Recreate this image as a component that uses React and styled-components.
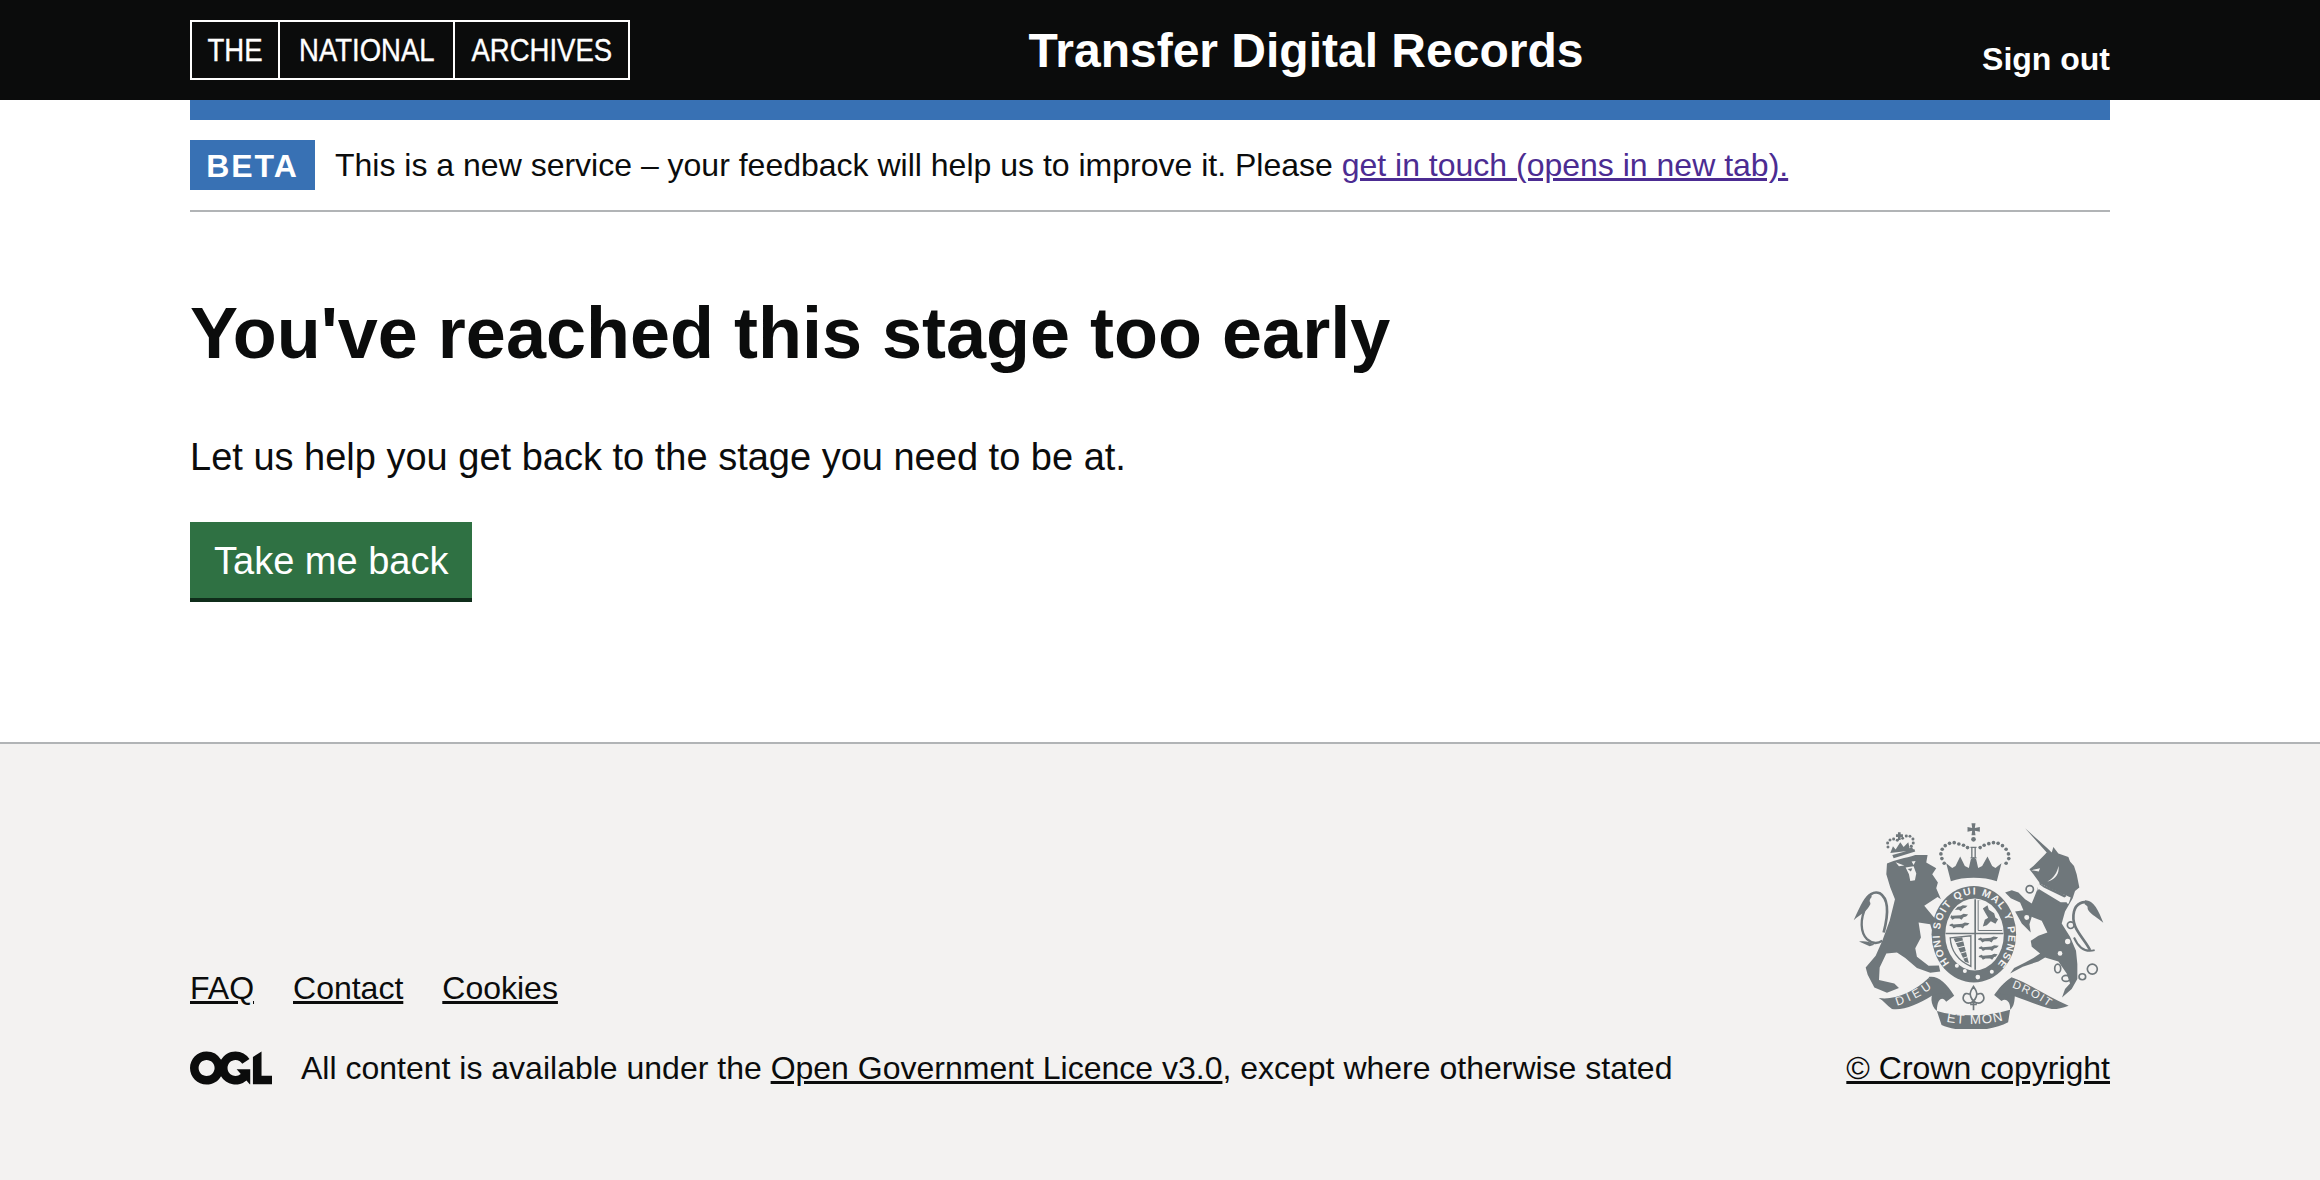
import React from 'react';
import styled, { createGlobalStyle } from 'styled-components';

const GlobalStyle = createGlobalStyle`
  html, body { margin: 0; padding: 0; }
  body {
    font-family: "Liberation Sans", Arial, sans-serif;
    color: #0b0c0c;
    background: #fff;
  }
`;

const Page = styled.div`
  min-height: 100vh;
  display: flex;
  flex-direction: column;
`;

const Width = styled.div`
  width: 1920px;
  margin-left: 190px;
`;

const Header = styled.header`
  background: #0b0c0c;
  height: 100px;
`;

const HeaderRow = styled(Width)`
  height: 100px;
  display: flex;
  justify-content: space-between;
`;

const Logo = styled.div`
  display: flex;
  height: 60px;
  margin-top: 20px;
  border: 2px solid #fff;
  box-sizing: border-box;
  width: 440px;
`;

const LogoCell = styled.span`
  width: ${(p) => p.$w}px;
  display: flex;
  align-items: center;
  justify-content: center;
  box-sizing: border-box;
  border-left: ${(p) => (p.$first ? 'none' : '2px solid #fff')};
`;

const LogoWord = styled.span`
  color: #fff;
  font-size: 32px;
  -webkit-text-stroke: 0.4px #fff;
  transform: scaleX(0.86);
  white-space: nowrap;
`;

const ServiceName = styled.div`
  color: #fff;
  font-weight: 700;
  font-size: 48px;
  line-height: 102px;
  margin-left: 0;
`;

const SignOut = styled.a`
  color: #fff;
  font-weight: 700;
  font-size: 32px;
  line-height: 36px;
  margin-top: 41px;
  text-decoration: none;
`;

const PhaseBar = styled(Width)`
  border-top: 20px solid #3871b4;
  border-bottom: 2px solid #b1b4b6;
  display: flex;
  align-items: flex-start;
  padding-top: 20px;
  height: 70px;
`;

const Tag = styled.strong`
  background: #3871b4;
  color: #fff;
  font-size: 32px;
  letter-spacing: 2px;
  height: 50px;
  line-height: 52px;
  width: 125px;
  text-align: center;
  flex: none;
  margin-right: 20px;
`;

const PhaseText = styled.p`
  margin: 0;
  font-size: 32px;
  line-height: 50px;
`;

const VisitedLink = styled.a`
  color: #4c2c92;
  text-decoration: underline;
`;

const Main = styled(Width)`
  padding-top: 79px;
  height: 530px;
  box-sizing: border-box;
`;

const Title = styled.h1`
  margin: 0;
  font-size: 72px;
  line-height: 84px;
  font-weight: 700;
`;

const Lead = styled.p`
  margin: 57px 0 0;
  font-size: 38px;
  line-height: 50px;
`;

const Button = styled.a`
  display: inline-block;
  margin-top: 40px;
  background: #2f7143;
  box-shadow: 0 4px 0 #0f2d1a;
  color: #fff;
  font-size: 38px;
  line-height: 78px;
  height: 76px;
  padding: 0 24px;
  text-decoration: none;
`;

const Footer = styled.footer`
  flex: 1;
  background: #f3f2f1;
  border-top: 2px solid #b1b4b6;
`;

const FooterRow = styled(Width)`
  display: flex;
  justify-content: space-between;
  align-items: flex-end;
  padding-top: 77px;
`;

const FooterLeft = styled.div`
  display: flex;
  flex-direction: column;
`;

const FooterLinks = styled.nav`
  display: flex;
  gap: 39px;
  margin-bottom: 40px;
`;

const FooterLink = styled.a`
  color: #0b0c0c;
  font-size: 32px;
  line-height: 40px;
  text-decoration: underline;
`;

const Licence = styled.div`
  display: flex;
  align-items: center;
  gap: 29px;
  font-size: 32px;
  line-height: 40px;
`;

const OglMark = styled.svg`
  width: 82px;
  height: 34px;
  color: #0b0c0c;
  flex: none;
`;

const FooterRight = styled.div`
  display: flex;
  flex-direction: column;
  align-items: flex-end;
`;

const CrestMark = styled.svg`
  width: 257px;
  height: 208px;
  margin-right: 3px;
  margin-bottom: 19px;
  display: block;
`;

function OglLogo() {
  return (
    <OglMark viewBox="0 0 483.2 195.7" aria-hidden="true">
      <path
        fill="currentColor"
        d="M421.5 142.8V.1l-50.7 32.3v161.1h112.4v-50.7zm-122.3-9.6A47.12 47.12 0 0 1 221 97.8c0-26 21.1-47.1 47.1-47.1 16.7 0 31.4 8.7 39.7 21.8l42.7-27.2A97.63 97.63 0 0 0 268.1 0c-36.5 0-68.3 20.1-85.1 49.7A98 98 0 0 0 97.8 0C43.9 0 0 43.9 0 97.8s43.9 97.8 97.8 97.8c36.5 0 68.3-20.1 85.1-49.7a97.76 97.76 0 0 0 149.6 25.4l19.4 22.2h3v-87.8h-80l24.3 27.5zM97.8 145c-26 0-47.1-21.1-47.1-47.1s21.1-47.1 47.1-47.1 47.2 21 47.2 47S123.8 145 97.8 145"
      />
    </OglMark>
  );
}

const INK = '#6f777b';
const BG = '#f3f2f1';

const lionCrownDots = [
  [113, 68], [112, 56], [119, 47], [130, 44], [141, 48], [157, 42], [168, 35], [179, 36], [188, 44], [189, 56], [183, 66],
];

const crownDots = [
  [42, 132], [35, 118], [32, 104], [36, 90], [45, 79], [58, 72], [72, 70], [86, 74], [100, 78], [112, 85],
  [150, 85], [162, 78], [176, 73], [190, 70], [204, 72], [217, 79], [228, 90], [235, 104], [236, 118], [228, 132],
];

// a row of walking lions in a quarter of the shield
function LionRow({ x, y }) {
  return (
    <path
      fill={INK}
      d={`M${x} ${y + 3} l8 -4 l4 3 l26 -2 l8 -4 l14 2 l-6 6 l-8 2 l-6 8 l-6 -4 l-14 0 l-8 4 l-4 -6 l-8 -2 z`}
    />
  );
}

function Crest() {
  return (
    <CrestMark viewBox="60 35 770 625" role="img" aria-label="Royal coat of arms">
      <defs>
        <path id="garter" d="M58 432 A 103 121 0 1 1 208 428" />
        <path id="bandLeft" d="M140 545 C175 535 215 515 248 490" />
        <path id="bandRight" d="M65 490 C105 505 145 525 182 552" />
        <path id="bandMid" d="M48 608 C90 618 170 618 218 604" />
        <clipPath id="shieldClip">
          <ellipse cx="133" cy="346" rx="84" ry="104" />
        </clipPath>
      </defs>

      {/* lion */}
      <g transform="translate(60 45)">
        <path
          fill={INK}
          d="M110 118 C135 105 165 102 195 92 L232 92 L228 115 L258 132 L246 150 L263 175 L258 192 L272 225 L262 218 L222 245 L272 305 L290 345 L270 358 L250 335 L240 300 L205 295 L212 340 L195 372 L200 398 L235 425 L266 424 L270 442 L240 446 L200 432 L165 402 L140 385 L108 388 L88 430 L86 468 L132 478 L146 492 L110 506 L72 490 L52 452 L46 430 L76 395 L96 350 L118 290 L134 225 L120 190 L108 150 Z"
        />
        <path fill="none" stroke={INK} strokeWidth="8" d="M100 325 C112 280 118 225 88 207 C70 200 52 212 44 235" />
        <path fill={INK} d="M62 207 C45 212 32 240 10 288 C30 270 50 262 60 240 C62 232 52 232 64 218 Z" />
        <path fill="none" stroke={INK} strokeWidth="7" d="M48 245 C28 285 30 325 50 345 C62 356 78 362 96 350" />
        <path fill={INK} d="M26 352 C45 350 58 352 72 362 L58 366 Z" />
        {/* face */}
        <path fill={BG} d="M136 114 L162 124 L146 126 Z M184 112 L196 110 L190 122 Z M166 130 L190 126 L198 148 L194 168 L180 170 L176 150 Z" />
        <path fill={INK} d="M172 134 L186 132 L182 142 Z" />
        {/* crown */}
        <path fill={INK} d="M143 24 h8 v6 h7 v8 h-7 v9 h-8 v-9 h-6 v-8 h6 Z" />
        <g fill={INK}>
          {lionCrownDots.map(([x, y]) => (
            <circle key={`${x}-${y}`} cx={x} cy={y} r="4.5" />
          ))}
        </g>
        <path fill={INK} d="M120 86 L128 66 L136 76 L150 54 L160 68 L174 54 L178 72 L185 68 L190 78 Z M126 92 L192 74 L195 82 L130 102 Z" />
      </g>

      {/* unicorn */}
      <g transform="translate(480 45)">
        <path
          fill={INK}
          d="M105 12 L172 72 L185 85 L190 68 L205 88 L235 98 L240 112 L252 125 L260 150 L268 190 L255 200 L248 222 L225 262 L215 298 L240 338 L258 380 L262 420 L262 465 L245 495 L216 520 L225 495 L240 478 L230 448 L205 412 L165 400 L145 412 L98 428 L60 448 L72 432 L105 415 L130 402 L150 388 L125 368 L122 350 L145 335 L172 325 L155 290 L125 278 L118 300 L122 325 L95 298 L75 262 L100 258 L90 235 L62 222 L45 205 L65 198 L85 205 L105 225 L125 238 L140 200 L148 175 L130 150 L118 135 L130 125 L160 95 L170 85 Z"
        />
        <path fill={BG} d="M205 125 C202 145 190 162 172 172 C192 168 210 150 205 125 Z M124 138 L150 132 L146 142 Z" />
        {/* collar */}
        <path fill={BG} d="M145 176 L242 220 L236 238 L212 240 L142 198 Z" />
        <path fill={INK} d="M148 180 l5 -2 l3 5 l4 -2 l3 5 l4 -3 l4 6 l5 -3 l3 6 l5 -3 l4 6 l5 -3 l3 7 l5 -3 l4 7 l5 -3 l3 7 l5 -3 l3 7 l5 -1 l3 6 l-6 4 l-62 -30 z M146 194 L212 234 L230 234 L232 242 L208 244 L142 202 Z" />
        {/* tail */}
        <path fill="none" stroke={INK} strokeWidth="8" d="M300 378 C282 340 240 312 252 262 C258 238 280 228 300 238" />
        <path fill={INK} d="M285 228 C312 228 326 260 340 296 C322 280 305 272 295 258 C290 250 298 248 284 240 Z" />
        <path fill="none" stroke={INK} strokeWidth="6" d="M252 340 C266 372 285 386 314 378" />
        {/* body spots */}
        <circle cx="233" cy="352" r="8" fill={BG} />
        <circle cx="210" cy="388" r="7" fill={BG} />
        {/* chain links */}
        <g fill={BG} stroke={INK} strokeWidth="5">
          <circle cx="119" cy="195" r="11" />
          <circle cx="110" cy="280" r="10" />
          <circle cx="242" cy="303" r="10" />
        </g>
        <g fill="none" stroke={INK} strokeWidth="5">
          <ellipse cx="203" cy="433" rx="9" ry="13" />
          <ellipse cx="228" cy="463" rx="12" ry="9" />
          <ellipse cx="277" cy="458" rx="10" ry="9" />
          <circle cx="307" cy="435" r="15" />
        </g>
      </g>

      {/* royal crown, garter and shield */}
      <g transform="translate(300 30)">
        <path fill={INK} d="M124 12 h12 l-2 14 l15 -3 v14 l-15 -3 l2 14 h-12 l2 -14 l-14 3 v-14 l14 3 Z" />
        <circle cx="130" cy="60" r="7" fill={INK} />
        <path fill="none" stroke={INK} strokeWidth="4" d="M125 84 V116 M135 84 V116 M121 84 H139 M121 116 H139" />
        <g fill={INK}>
          {crownDots.map(([x, y]) => (
            <circle key={`${x}-${y}`} cx={x} cy={y} r="5.5" />
          ))}
        </g>
        <path
          fill={INK}
          d="M48 132 L66 146 L76 140 L90 112 L104 140 L116 146 L122 120 L130 114 L138 120 L144 146 L156 140 L172 112 L186 140 L196 146 L214 132 L200 186 C160 172 100 172 62 186 Z"
        />
        <path fill={BG} d="M62 198 C100 184 160 184 200 198 L196 214 C160 202 100 202 66 214 Z" />

        <ellipse cx="131" cy="345" rx="127" ry="145" fill={INK} />
        <ellipse cx="133" cy="346" rx="88" ry="108" fill={BG} />
        <g clipPath="url(#shieldClip)">
          <LionRow x={52} y={262} />
          <LionRow x={54} y={288} />
          <LionRow x={58} y={314} />
          <LionRow x={144} y={356} />
          <LionRow x={146} y={382} />
          <LionRow x={146} y={408} />
          {/* the lion rampant */}
          <path fill="none" stroke={INK} strokeWidth="3" d="M144 242 V334 H218 V240 Z" />
          <path fill={INK} d="M158 268 L172 258 L176 272 L192 282 L196 296 L204 300 L196 314 L182 306 L170 318 L158 322 L164 302 L174 296 L166 282 Z" />
          {/* the harp */}
          <path fill="none" stroke={INK} strokeWidth="4" d="M60 356 L122 350 L122 442 C85 425 62 395 60 356 Z" />
          <path fill={INK} d="M70 358 L96 354 L116 432 L104 428 Z" />
          <path stroke={BG} strokeWidth="3" d="M72 372 L104 364 M76 388 L108 380 M84 404 L112 396 M92 420 L114 412" />
        </g>
        <path stroke={INK} strokeWidth="5" d="M135 240 V452 M46 343 H220" />

        <g fill={BG}>
          <circle cx="80" cy="440" r="6" />
          <circle cx="104" cy="456" r="6" />
          <circle cx="143" cy="474" r="7" />
          <circle cx="185" cy="458" r="6" />
        </g>
        <g fill={BG} fontFamily='"Liberation Sans", sans-serif' fontWeight="700" fontSize="31">
          <text>
            <textPath href="#garter" textLength="540" lengthAdjust="spacing">HONI SOIT QUI MAL Y PENSE</textPath>
          </text>
        </g>

        {/* fleur under the shield */}
        <path
          fill="none"
          stroke={INK}
          strokeWidth="5"
          d="M130 502 C120 516 114 528 130 546 C146 528 140 516 130 502 Z M118 526 C100 516 94 538 104 548 C112 556 122 552 130 546 C138 552 148 556 156 548 C166 538 160 516 142 526 M120 556 H140 M130 546 V574"
        />
        {/* middle of the motto */}
        <path fill={INK} d="M20 576 C80 594 170 594 240 572 L234 610 C180 640 80 640 34 618 Z" />
        <path fill={INK} d="M-5 474 C20 468 48 490 72 530 L48 548 C36 530 20 540 20 576 C0 560 -2 525 16 512 Z" />
        <path fill={INK} d="M240 572 C242 550 228 535 214 546 L192 528 C205 510 220 490 246 474 L262 508 C248 515 262 555 240 572 Z" />
      </g>

      {/* the ribbons either side */}
      <g transform="translate(60 45)">
        <path fill={INK} d="M85 522 C130 530 190 505 235 462 C255 470 280 480 292 512 C270 505 255 510 245 515 C205 540 160 560 125 555 C110 545 100 530 85 522 Z" />
        <text fill={BG} fontFamily='"Liberation Sans", sans-serif' fontSize="36">
          <textPath href="#bandLeft" textLength="118" lengthAdjust="spacing">DIEU</textPath>
        </text>
      </g>
      <g transform="translate(480 45)">
        <path fill={INK} d="M25 500 C40 480 55 465 70 462 C120 480 175 520 236 545 C215 552 200 556 185 555 C140 545 90 520 50 510 C35 515 28 510 25 500 Z" />
        <text fill={BG} fontFamily='"Liberation Sans", sans-serif' fontSize="34">
          <textPath href="#bandRight" textLength="125" lengthAdjust="spacing">DROIT</textPath>
        </text>
      </g>
      <g transform="translate(300 30)">
        <text fill={BG} fontFamily='"Liberation Sans", sans-serif' fontSize="40">
          <textPath href="#bandMid" textLength="172" lengthAdjust="spacing">ET MON</textPath>
        </text>
      </g>
    </CrestMark>
  );
}

export default function App() {
  return (
    <Page>
      <GlobalStyle />
      <Header>
        <HeaderRow>
          <Logo>
            <LogoCell $first $w={86}><LogoWord>THE</LogoWord></LogoCell>
            <LogoCell $w={175}><LogoWord>NATIONAL</LogoWord></LogoCell>
            <LogoCell $w={175}><LogoWord>ARCHIVES</LogoWord></LogoCell>
          </Logo>
          <ServiceName>Transfer Digital Records</ServiceName>
          <SignOut href="#">Sign out</SignOut>
        </HeaderRow>
      </Header>
      <PhaseBar>
        <Tag>BETA</Tag>
        <PhaseText>
          This is a new service – your feedback will help us to improve it. Please{' '}
          <VisitedLink href="#">get in touch (opens in new tab).</VisitedLink>
        </PhaseText>
      </PhaseBar>
      <Main>
        <Title>You've reached this stage too early</Title>
        <Lead>Let us help you get back to the stage you need to be at.</Lead>
        <Button href="#">Take me back</Button>
      </Main>
      <Footer>
        <FooterRow>
          <FooterLeft>
            <FooterLinks>
              <FooterLink href="#">FAQ</FooterLink>
              <FooterLink href="#">Contact</FooterLink>
              <FooterLink href="#">Cookies</FooterLink>
            </FooterLinks>
            <Licence>
              <OglLogo />
              <span>
                All content is available under the{' '}
                <FooterLink href="#">Open Government Licence v3.0</FooterLink>, except where otherwise stated
              </span>
            </Licence>
          </FooterLeft>
          <FooterRight>
            <Crest />
            <FooterLink href="#">© Crown copyright</FooterLink>
          </FooterRight>
        </FooterRow>
      </Footer>
    </Page>
  );
}
